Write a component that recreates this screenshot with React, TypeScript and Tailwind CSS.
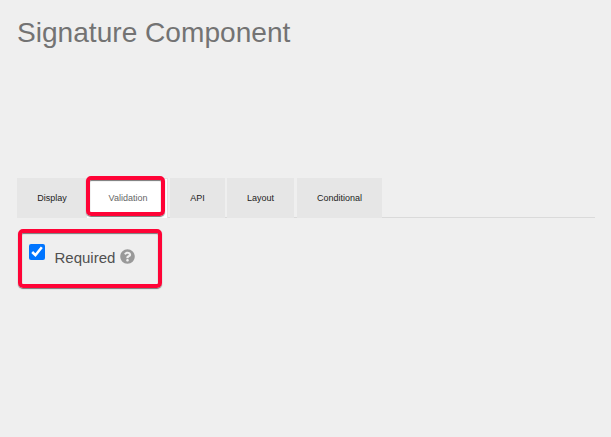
import { FaQuestionCircle } from "react-icons/fa";

const laterTabs = [
  { label: "API", box: "ml-[2px] w-[55px]" },
  { label: "Layout", box: "ml-[2px] w-[67px]" },
  { label: "Conditional", box: "ml-[3px] w-[85px]" },
];

export default function App() {
  return (
    <main className="h-[437px] w-[611px] overflow-hidden bg-[#efefef] pl-[17px] pr-4 pt-4 font-['Liberation_Sans',Arial,sans-serif]">
      <h1 className="h-[162px] whitespace-nowrap text-[28.1px] leading-[34px] text-[#737373]">
        Signature Component
      </h1>
      <nav role="tablist" className="flex h-10 border-b border-[#dadada] text-[9px] text-[#222]">
        <button role="tab" className="h-10 w-[70px] bg-[#e6e6e6] pt-[2px]">
          <span className="inline-block scale-y-110">Display</span>
        </button>
        <div className="relative h-10 w-[81px] border-r border-t border-[#e2e2e2] bg-white">
          <button role="tab" aria-selected="true" className="h-[38px] w-full pl-[2px] pt-[2px] text-[#666]">
            <span className="inline-block scale-y-110">Validation</span>
          </button>
          <span className="absolute -left-px -top-[3px] h-10 w-[79px] rounded-[5px] border-4 border-[#ff0336] shadow-[0_1px_1px_#777,inset_0_1px_1px_#777]" />
        </div>
        {laterTabs.map((tab) => (
          <button key={tab.label} role="tab" className={`h-10 bg-[#e6e6e6] pt-[2px] ${tab.box}`}>
            <span className="inline-block scale-y-110">{tab.label}</span>
          </button>
        ))}
      </nav>
      <label className="ml-px mt-[11px] flex h-[59px] w-[144px] rounded-[5px] border-4 border-[#ff0336] pl-[7px] shadow-[0_1px_1px_#777,inset_0_1px_1px_#777]">
        <input type="checkbox" defaultChecked className="mt-[11px] h-4 w-4 accent-[#0075ff]" />
        <span className="ml-[9.5px] mt-[15px] text-[15px] leading-5 text-[#505050]">Required</span>
        <FaQuestionCircle className="ml-[4.5px] mt-4 h-[15px] w-[15px] text-[#999]" />
      </label>
    </main>
  );
}
